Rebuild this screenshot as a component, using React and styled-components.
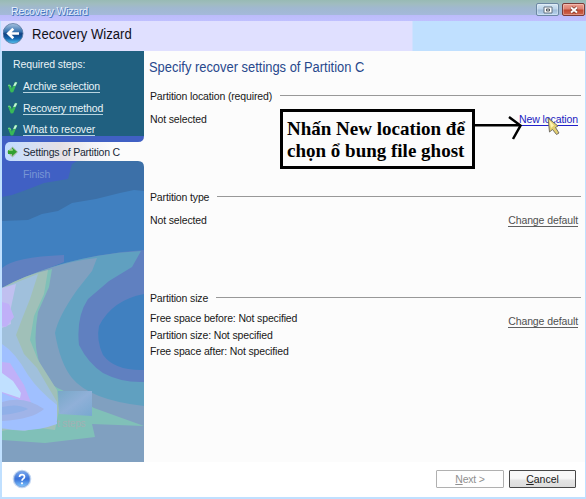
import React from "react";
import styled, { createGlobalStyle } from "styled-components";

const GlobalStyle = createGlobalStyle`
  * { box-sizing: border-box; }
  body { margin: 0; background: #fff; }
`;

const Window = styled.div`
  position: relative;
  width: 586px;
  height: 499px;
  display: flex;
  flex-direction: column;
  background: #c0e0ff;
  overflow: hidden;
  font: 10.5px/14px "Liberation Sans", Arial, sans-serif;
  letter-spacing: -0.14px;
  color: #181818;
`;

const TitleBar = styled.header`
  flex: none;
  height: 21px;
  display: flex;
  align-items: flex-start;
  justify-content: space-between;
  padding: 3px 1px 0 11px;
  background: linear-gradient(#98bab4 0, #a0bcc0 4px, #a0b8d0 8px, #a4b9da 14.5px, #bcbcfa 15px, #c0c0ff 21px);
`;

const TitleText = styled.span`
  color: #e8f2ff;
  letter-spacing: -0.2px;
  line-height: 16px;
  text-shadow: 1px 1px 0 #4070c0, 0 1px 0 #6c94d0;
`;

const WindowButtons = styled.div`
  display: flex;
  gap: 3px;
`;

const WindowButton = styled.div`
  width: 23px;
  height: 13px;
  display: flex;
  align-items: center;
  justify-content: center;
  border: 1px solid ${(p) => (p.$close ? "#7c3c38" : "#6c88a4")};
  border-radius: 2px;
  background: ${(p) =>
    p.$close
      ? "linear-gradient(#eda090 0, #dc8070 5px, #c04830 6px, #d06850 11px)"
      : "linear-gradient(#d4e6f4 0, #bcd4ea 5px, #a0bcd8 6px, #b8d4f0 11px)"};
  box-shadow: inset 0 0 0 1px rgba(255, 255, 255, 0.3);
`;

const WizardBar = styled.div`
  flex: none;
  height: 30px;
  display: flex;
  align-items: center;
  gap: 7px;
  padding-left: 2px;
  padding-bottom: 5px;
  margin-left: 1px;
  background: linear-gradient(90deg, #e0e0ff 411px, #c0e0ff 412px);
`;

const WizardTitle = styled.h1`
  margin: 0;
  font-size: 15.5px;
  line-height: 20px;
  font-weight: 400;
  letter-spacing: 0;
  color: #101018;
  white-space: nowrap;
  transform: scaleX(0.845);
  transform-origin: 0 50%;
`;

const Body = styled.div`
  flex: none;
  height: 411px;
  display: flex;
  margin: 0 1px 0 2px;
  background: #fcfcfc;
`;

const Sidebar = styled.nav`
  position: relative;
  width: 142px;
  flex: none;
  overflow: hidden;
  background: #4080c0;
`;

const Artwork = styled.svg`
  position: absolute;
  inset: 0;
  width: 142px;
  height: 411px;
`;

const StepsTitle = styled.div`
  position: relative;
  margin: 6px 0 0 11px;
  color: #e8f2f6;
  letter-spacing: -0.08px;
`;

const StepList = styled.ul`
  position: relative;
  list-style: none;
  margin: 5.5px 0 0;
  padding: 0;
`;

const Step = styled.li`
  height: 21.5px;
  display: flex;
  align-items: center;
  gap: 5px;
  padding-left: 5px;
  white-space: nowrap;
  color: #e8f4f8;
  svg { flex: none; }
`;

const ActiveStep = styled(Step)`
  height: 19px;
  margin: 1px 0 1px 3px;
  padding-left: 2px;
  border-radius: 5px 0 0 5px;
  color: #182838;
  letter-spacing: -0.2px;
  background: linear-gradient(90deg, #c0dcff 0, #dce0f0 35px, #e4e0e4 55px, #f4f4f8 88px, #fcfcfc 110px);
`;

const FinishStep = styled(Step)`
  height: 24px;
  padding-left: 21px;
  color: #7896d4;
`;

const StepLink = styled.span`
  border-bottom: 1px solid #b8d4e0;
  line-height: 11px;
`;

const NextSteps = styled.div`
  position: absolute;
  left: 55px;
  top: 366px;
  font-size: 10px;
  color: #a2b0b4;
`;

const Content = styled.main`
  flex: 1;
  padding: 5px 4px 0 5px;
`;

const PageTitle = styled.h2`
  margin: 0 0 10px;
  font-size: 15.5px;
  line-height: 22px;
  font-weight: 400;
  letter-spacing: 0;
  color: #28488c;
  white-space: nowrap;
  transform: scaleX(0.833);
  transform-origin: 0 50%;
`;

const Section = styled.section`
  height: 101px;
`;

const SectionHead = styled.div`
  display: flex;
  align-items: center;
  gap: 8px;
  padding-left: 1px;
  height: 16px;
  &::after {
    content: "";
    flex: 1;
    height: 1px;
    margin-bottom: 1px;
    background: #989898;
  }
`;

const SectionBody = styled.div`
  display: flex;
  justify-content: space-between;
  align-items: flex-start;
  padding: ${(p) => p.$top || 8}px 3px 0 1px;
`;

const Details = styled.div`
  display: flex;
  flex-direction: column;
  line-height: ${(p) => p.$line || 14}px;
`;

const ActionLink = styled.a`
  margin-top: ${(p) => p.$drop || 0}px;
  line-height: 11px;
  padding-top: 2px;
  letter-spacing: -0.1px;
  color: ${(p) => (p.$primary ? "#2020c0" : "#505050")};
  border-bottom: 1px solid ${(p) => (p.$primary ? "#2020c8" : "#606060")};
`;

const Footer = styled.footer`
  flex: none;
  height: 35px;
  margin: 0 1px 2px 2px;
  display: flex;
  align-items: flex-start;
  padding: 7px 9px 0 10px;
  background: #fff;
`;

const FooterButtons = styled.div`
  margin: 1px 0 0 auto;
  display: flex;
  gap: 5px;
`;

const Button = styled.button`
  width: ${(p) => (p.$muted ? 68 : 67)}px;
  height: 18px;
  padding: 0;
  font: inherit;
  font-size: 10.5px;
  letter-spacing: ${(p) => (p.$muted ? "-0.2px" : "0")};
  line-height: 15px;
  color: ${(p) => (p.$muted ? "#909090" : "#202020")};
  border: 1px solid ${(p) => (p.$muted ? "#b0b0b0" : "#484848")};
  border-radius: 1px;
  background: ${(p) => (p.$muted ? "#fefefe" : "linear-gradient(#f8f8f8 0 45%, #e4e4e4 60%, #dcdcdc)")};
`;

const Callout = styled.aside`
  position: absolute;
  left: 280px;
  top: 109px;
  width: 195px;
  height: 60px;
  padding: 6px 0 0 4px;
  border: 3px solid #000;
  background: #fcfcfc;
  color: #000;
  font: bold 19px/22px "Liberation Serif", "Times New Roman", serif;
  letter-spacing: 0;
  white-space: nowrap;
`;

const Pointer = styled.svg`
  position: absolute;
  left: 472px;
  top: 110px;
`;

const Check = () => (
  <svg width="11" height="13" viewBox="0 0 11 13">
    <path d="M0.8 4 3 3.8 4.8 7.5 8 0.8 10.4 1.2 6.2 11.2 3.8 11.4Z" fill="#38b858" />
    <path d="M6.2 5 8 1.2 10.2 1.6 8.6 4.8Z" fill="#c8f0e0" />
    <path d="M1 4.3 3 4.2 4 6.2" fill="none" stroke="#70d888" />
  </svg>
);

const BackIcon = () => (
  <svg width="22" height="23" viewBox="0 0 22 23">
    <defs>
      <linearGradient id="orb" x2="0" y2="1">
        <stop offset="0" stopColor="#a8c4e0" />
        <stop offset=".4" stopColor="#3874b0" />
        <stop offset=".52" stopColor="#104080" />
        <stop offset=".75" stopColor="#1468b0" />
        <stop offset="1" stopColor="#58c8f4" />
      </linearGradient>
    </defs>
    <circle cx="10" cy="11.5" r="10" fill="url(#orb)" stroke="#5878a0" strokeWidth=".8" />
    <path d="M16 11.5H6M10.3 6.7 5.3 11.5l5 4.8" fill="none" stroke="#fff" strokeWidth="2.7" />
  </svg>
);

const SidebarArt = () => (
  <Artwork viewBox="2 51 142 411" preserveAspectRatio="none">
    <path d="M2 130H144V191L134 190 120 193 96 199 72 203 58 211 42 214 28 220 2 221Z" fill="#3c70a8" />
    <path d="M2 51H144V136H2Z" fill="#206080" />
    <path d="M2 136H144V142H110L72 164 68 179 44 183 26 190 12 195 2 197Z" fill="#4060c4" />
    <path d="M5 142H144V161H5Z" fill="#4060c4" />
    <path d="M2 268Q14 257 64 255V262L40 272 2 290Z" fill="#6080c0" />
    <path d="M2 288Q65 255 144 250V462H2Z" fill="#6080c0" />
    <path d="M2 288Q65 255 141 251L132 267 109 281 88 299Q76 317 79 345 88 363 103 373 122 383 144 382V462H2Z" fill="#60a0c0" />
    <path d="M2 288Q50 263 97 258L92 271 77 290Q58 317 55 333 60 363 72 378 90 400 144 406V462H2Z" fill="#80a0c0" />
    <path d="M2 288Q26 276 52 269L49 287 38 312Q33 340 38 358 46 385 62 390L94 408 144 426 92 424 95 437 45 443 2 440Z" fill="#80c0b8" />
    <path d="M2 288Q25 275 48 270L44 294 34 316 30 340 38 360 57 390 59 410 55 430 25 426 2 431Z" fill="#a0c0b8" />
    <path d="M2 288 38 274 30 299 22 319 16 335 24 354 37 368 57 402 57 422 25 431 2 429Z" fill="#a0c0dc" />
    <path d="M2 288 16 284 10 312 11 324 2 328Z" fill="#c0c0f0" />
    <path d="M2 344Q15 352 28 375 38 390 57 405V424Q30 434 2 428Z" fill="#a0c0ff" />
    <path d="M2 302 9 304 14 317 6 327 2 326ZM2 362 10 363 24 385 32 405 17 399 2 393Z" fill="#c0b0f8" />
    <path d="M2 373 13 381 21 393 20 398 2 392Z" fill="#c0e0ff" />
    <path d="M2 402Q24 395 44 409 33 419 2 421Z" fill="#a0b4e8" />
    <path d="M2 407Q18 403 28 409 20 413 2 415Z" fill="#90b0e8" />
    <path d="M58 391H92V416L59 414Z" fill="url(#cube)" />
    <defs>
      <linearGradient id="cube" x1="0" x2="1" y2="1">
        <stop offset="0" stopColor="#78a8c8" />
        <stop offset=".5" stopColor="#90b0d8" />
        <stop offset="1" stopColor="#78a8d0" />
      </linearGradient>
    </defs>
    <path d="M144 294Q112 300 99 326 96 340 103 355 115 371 144 370Z" fill="#4080c0" />
    <path d="M144 136Q144 142 138 142V161Q144 161 144 167Z" fill="#fcfcfc" />
  </Artwork>
);

export default function App() {
  return (
    <Window>
      <GlobalStyle />
      <TitleBar>
        <TitleText>Recovery Wizard</TitleText>
        <WindowButtons>
          <WindowButton>
            <svg width="10" height="8"><path d="M1 1H9V7H1Z" fill="#fff" stroke="#607080" /><path d="M3.5 3H6.5V5H3.5Z" fill="#ddd" stroke="#505860" /></svg>
          </WindowButton>
          <WindowButton $close>
            <svg width="10" height="8"><path d="M2 1.5 8 6.5M8 1.5 2 6.5" stroke="#78382c" strokeWidth="3.5" /><path d="M2 1.5 8 6.5M8 1.5 2 6.5" stroke="#fff" strokeWidth="2" /></svg>
          </WindowButton>
        </WindowButtons>
      </TitleBar>
      <WizardBar>
        <BackIcon />
        <WizardTitle>Recovery Wizard</WizardTitle>
      </WizardBar>
      <Body>
        <Sidebar>
          <SidebarArt />
          <StepsTitle>Required steps:</StepsTitle>
          <StepList>
            <Step><Check /><StepLink>Archive selection</StepLink></Step>
            <Step><Check /><StepLink>Recovery method</StepLink></Step>
            <Step><Check /><StepLink>What to recover</StepLink></Step>
            <ActiveStep>
              <svg width="11" height="12" viewBox="0 0 11 12">
                <path d="M5.5.5 11 6 5.5 11.5 0 6Z" fill="#a8bca8" />
                <path d="M1 4H5V1.5L10 5.8 5 10V8H1Z" fill="#30a030" />
                <path d="M1.5 4.5H5.5V3" fill="none" stroke="#80d070" />
              </svg>
              <span>Settings of Partition C</span>
            </ActiveStep>
            <FinishStep>Finish</FinishStep>
          </StepList>
          <NextSteps>t steps</NextSteps>
        </Sidebar>
        <Content>
          <PageTitle>Specify recover settings of Partition C</PageTitle>
          <Section>
            <SectionHead>Partition location (required)</SectionHead>
            <SectionBody>
              <Details>Not selected</Details>
              <ActionLink $primary>New location</ActionLink>
            </SectionBody>
          </Section>
          <Section>
            <SectionHead>Partition type</SectionHead>
            <SectionBody>
              <Details>Not selected</Details>
              <ActionLink>Change default</ActionLink>
            </SectionBody>
          </Section>
          <Section>
            <SectionHead>Partition size</SectionHead>
            <SectionBody $top={4}>
              <Details $line={16.6}>
                <span>Free space before: Not specified</span>
                <span>Partition size: Not specified</span>
                <span>Free space after: Not specified</span>
              </Details>
              <ActionLink $drop={4}>Change default</ActionLink>
            </SectionBody>
          </Section>
        </Content>
      </Body>
      <Footer>
        <svg width="20" height="20" viewBox="0 0 20 20">
          <defs>
            <linearGradient id="help" x2="0" y2="1">
              <stop offset="0" stopColor="#78a8f0" />
              <stop offset=".5" stopColor="#3870d8" />
              <stop offset="1" stopColor="#80c8ff" />
            </linearGradient>
          </defs>
          <circle cx="10" cy="10" r="9.3" fill="#c4d8f4" />
          <circle cx="10" cy="10" r="7.8" fill="url(#help)" stroke="#6890d0" strokeWidth=".6" />
          <path d="M7.5 8Q7.6 5.6 10 5.6T12.5 7.7Q12.5 9 11.2 9.7 10 10.4 10 11.8" fill="none" stroke="#fff" strokeWidth="1.7" />
          <circle cx="10" cy="14.3" r="1.1" fill="#fff" />
        </svg>
        <FooterButtons>
          <Button $muted><u>N</u>ext &gt;</Button>
          <Button><u>C</u>ancel</Button>
        </FooterButtons>
      </Footer>
      <Callout>
        Nhấn New location để
        <br />
        chọn ổ bung file ghost
      </Callout>
      <Pointer width="90" height="34" viewBox="472 110 90 34">
        <path d="M474 125.3H520" stroke="#000" strokeWidth="2.6" />
        <path d="M509 117 520.5 125.5 513 139" fill="none" stroke="#000" strokeWidth="2.5" />
        <path d="M548 118 558 126 555.5 127.5 559 133 556.5 134.5 552.5 129.5 549.5 132Z" fill="#e4d070" stroke="#686460" strokeWidth=".9" />
        <path d="M549.5 120.5 551 128 554 125.5Z" fill="#fff4b0" />
      </Pointer>
    </Window>
  );
}
